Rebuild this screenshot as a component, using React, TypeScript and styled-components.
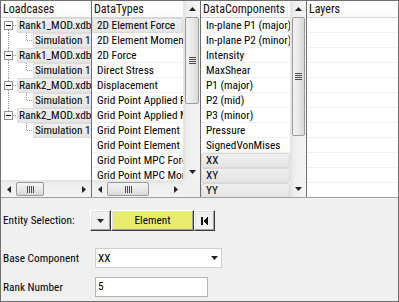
import React from 'react';
import styled, { createGlobalStyle, css } from 'styled-components';

const FONT = `'Roboto', 'Liberation Sans', Arial, sans-serif`;

const GlobalStyle = createGlobalStyle`
  html, body { margin: 0; padding: 0; background: #f0f0f0; }
  body { font-family: ${FONT}; font-stretch: 75%; }
  * { box-sizing: border-box; }
`;

const Frame = styled.div`
  width: 399px;
  height: 302px;
  border: 1px solid #707070;
  background: #f0f0f0;
  display: flex;
  flex-direction: column;
  overflow: hidden;
`;

const PanelRow = styled.div`
  display: grid;
  grid-template-columns: 91px 109px 106px 1fr;
  height: 197px;
  flex-shrink: 0;
  border-bottom: 1px solid #a0a0a0;
`;

const Panel = styled.div<{ $vscroll?: number; $hscroll?: boolean; $last?: boolean }>`
  display: grid;
  grid-template-columns: 1fr ${p => (p.$vscroll ? `${p.$vscroll}px` : '')};
  grid-template-rows: 1fr ${p => (p.$hscroll ? '17px' : '')};
  border-right: ${p => (p.$last ? 'none' : '1px solid #6f6f6f')};
  background: #fff;
  overflow: hidden;
  min-width: 0;
  min-height: 0;
`;

const List = styled.div`
  display: flex;
  flex-direction: column;
  overflow: hidden;
  min-width: 0;
  min-height: 0;
`;

const Header = styled.div`
  height: 17px;
  flex-shrink: 0;
  padding-left: 2px;
  border-bottom: 1px solid #d5d5d5;
  background: linear-gradient(#ffffff, #fafafa);
  font-size: 12px;
  line-height: 16px;
  color: #1c0c0c;
  white-space: nowrap;
`;

const Rows = styled.div<{ $grid?: boolean }>`
  flex: 1;
  background: ${p =>
    p.$grid ? 'repeating-linear-gradient(to bottom, transparent 0 14px, #eef2f7 14px 15px)' : '#fff'};
`;

const Item = styled.div<{ $selected?: boolean }>`
  height: 15px;
  padding-left: 5px;
  font-size: 11.3px;
  line-height: 15px;
  color: #000;
  white-space: nowrap;
  overflow: hidden;
  ${p =>
    p.$selected &&
    css`
      background: linear-gradient(#efefef, #e4e4e4);
      border: 1px solid #d9d9d9;
      border-radius: 2px;
      padding-left: 4px;
      line-height: 13px;
    `}
`;

const TreeRow = styled.div`
  height: 15px;
  display: flex;
  white-space: nowrap;
`;

const TreeSvg = styled.svg`
  flex-shrink: 0;
`;

const TreeLabel = styled.span`
  flex-shrink: 0;
  height: 15px;
  padding: 0 2px 0 1px;
  background: linear-gradient(#efefef, #e5e5e5);
  border: 1px solid #dcdcdc;
  border-radius: 1px;
  font-size: 11.3px;
  line-height: 13px;
  color: #000;
`;

/* scrollbars */
const VTrack = styled.div`
  display: flex;
  flex-direction: column;
  background: linear-gradient(to right, #e3e3e3 0, #eeeeee 3px, #f4f4f4 100%);
  border-left: 1px solid #e6e6e6;
  min-height: 0;
`;

const HTrack = styled.div`
  display: flex;
  background: linear-gradient(to bottom, #e3e3e3 0, #eeeeee 3px, #f4f4f4 100%);
  border-top: 1px solid #e6e6e6;
  min-width: 0;
`;

const ArrowCell = styled.div<{ $horizontal?: boolean }>`
  flex-shrink: 0;
  ${p => (p.$horizontal ? 'width: 15px;' : 'height: 16px;')}
  display: flex;
  align-items: center;
  justify-content: center;
`;

const Spacer = styled.div`
  flex: 1;
`;

const VThumb = styled.div<{ $offset: number; $length: number }>`
  margin: ${p => p.$offset}px 1px 0 1px;
  height: ${p => p.$length}px;
  flex-shrink: 0;
  border: 1px solid #9a9a9a;
  border-radius: 2px;
  background: linear-gradient(to right, #f4f4f4, #e8e8e8 50%, #d9d9d9);
  display: flex;
  align-items: center;
  justify-content: center;
`;

const HThumb = styled.div<{ $offset: number; $length: number }>`
  margin: 1px 0 1px ${p => p.$offset}px;
  width: ${p => p.$length}px;
  flex-shrink: 0;
  border: 1px solid #9a9a9a;
  border-radius: 2px;
  background: linear-gradient(to bottom, #f4f4f4, #e8e8e8 50%, #d9d9d9);
  display: flex;
  align-items: center;
  justify-content: center;
`;

const Corner = styled.div`
  background: #f0f0f0;
`;

/* bottom form */
const Form = styled.div`
  flex: 1;
  padding: 12px 0 0 1px;
  display: flex;
  flex-direction: column;
`;

const FieldRow = styled.div<{ $gap: number; $height: number }>`
  display: flex;
  align-items: center;
  margin-top: ${p => p.$gap}px;
  height: ${p => p.$height}px;
`;

const Label = styled.span`
  width: 88px;
  flex-shrink: 0;
  padding-left: 1px;
  font-size: 11.3px;
  color: #000;
  white-space: nowrap;
`;

const RaisedButton = styled.button<{ $width: number; $yellow?: boolean }>`
  width: ${p => p.$width}px;
  height: 21px;
  margin: 0;
  padding: 0;
  border: 1px solid;
  border-color: #ffffff #3c3c3c #3c3c3c #ffffff;
  box-shadow: inset -1px -1px #a0a0a0, inset 1px 1px #e3e3e3;
  background: ${p => (p.$yellow ? '#e9eb6e' : '#f0f0f0')};
  font-family: inherit;
  font-stretch: inherit;
  font-size: 11.3px;
  color: #000;
  display: flex;
  align-items: center;
  justify-content: center;
`;

const Select = styled.div`
  margin-left: 5px;
  width: 127px;
  height: 20px;
  border: 1px solid #cfcfcf;
  background: #fff;
  display: flex;
  align-items: center;
  justify-content: space-between;
  padding: 0 3px 0 2px;
  font-size: 11.3px;
  color: #000;
`;

const TextBox = styled.div`
  margin-left: 5px;
  width: 113px;
  height: 20px;
  border: 1px solid #b4b4b4;
  background: #fff;
  padding-left: 2px;
  font-size: 11.3px;
  line-height: 18px;
  color: #000;
`;

const Arrow = ({ dir }: { dir: 'up' | 'down' | 'left' | 'right' }) => {
  const pts = {
    up: '0,4 7,4 3.5,0',
    down: '0,0 7,0 3.5,4',
    left: '4,0 4,7 0,3.5',
    right: '0,0 0,7 4,3.5',
  }[dir];
  const vertical = dir === 'up' || dir === 'down';
  return (
    <svg width={vertical ? 7 : 4} height={vertical ? 4 : 7} viewBox={vertical ? '0 0 7 4' : '0 0 4 7'}>
      <polygon points={pts} fill="#222" />
    </svg>
  );
};

const Grip = ({ horizontal }: { horizontal?: boolean }) =>
  horizontal ? (
    <svg width="7" height="7" shapeRendering="crispEdges">
      {[0, 2, 4, 6].map(x => (
        <line key={x} x1={x + 0.5} y1="0" x2={x + 0.5} y2="7" stroke="#4d4d4d" />
      ))}
    </svg>
  ) : (
    <svg width="7" height="7" shapeRendering="crispEdges">
      {[0, 2, 4, 6].map(y => (
        <line key={y} x1="0" y1={y + 0.5} x2="7" y2={y + 0.5} stroke="#4d4d4d" />
      ))}
    </svg>
  );

const VScrollBar = ({ offset, length }: { offset: number; length: number }) => (
  <VTrack>
    <ArrowCell>
      <Arrow dir="up" />
    </ArrowCell>
    <VThumb $offset={offset} $length={length}>
      <Grip />
    </VThumb>
    <Spacer />
    <ArrowCell>
      <Arrow dir="down" />
    </ArrowCell>
  </VTrack>
);

const HScrollBar = ({ offset, length }: { offset: number; length: number }) => (
  <HTrack>
    <ArrowCell $horizontal>
      <Arrow dir="left" />
    </ArrowCell>
    <HThumb $offset={offset} $length={length}>
      <Grip horizontal />
    </HThumb>
    <Spacer />
    <ArrowCell $horizontal>
      <Arrow dir="right" />
    </ArrowCell>
  </HTrack>
);

const DOT = { stroke: '#9c9c9c', strokeDasharray: '1 1' };

interface TreeNode {
  label: string;
  child: string;
}

const TreeLines = ({ root, first, hasNext }: { root: boolean; first: boolean; hasNext: boolean }) => (
  <TreeSvg width={root ? 16 : 32} height="15" shapeRendering="crispEdges">
    {root ? (
      <>
        {!first && <line x1="7.5" y1="0" x2="7.5" y2="3" {...DOT} />}
        {hasNext && <line x1="7.5" y1="12" x2="7.5" y2="15" {...DOT} />}
        <line x1="12" y1="7.5" x2="16" y2="7.5" {...DOT} />
        <rect x="3.5" y="3.5" width="8" height="8" fill="#fff" stroke="#919191" />
        <line x1="5" y1="7.5" x2="10" y2="7.5" stroke="#000" />
      </>
    ) : (
      <>
        {hasNext && <line x1="7.5" y1="0" x2="7.5" y2="15" {...DOT} />}
        <line x1="25.5" y1="0" x2="25.5" y2="7.5" {...DOT} />
        <line x1="26" y1="7.5" x2="32" y2="7.5" {...DOT} />
      </>
    )}
  </TreeSvg>
);

const loadcases: TreeNode[] = [
  { label: 'Rank1_MOD.xdb', child: 'Simulation 1' },
  { label: 'Rank1_MOD.xdb', child: 'Simulation 1' },
  { label: 'Rank2_MOD.xdb', child: 'Simulation 1' },
  { label: 'Rank2_MOD.xdb', child: 'Simulation 1' },
];

const dataTypes = [
  '2D Element Force',
  '2D Element Moment',
  '2D Force',
  'Direct Stress',
  'Displacement',
  'Grid Point Applied Force',
  'Grid Point Applied Moment',
  'Grid Point Element Force',
  'Grid Point Element Moment',
  'Grid Point MPC Force',
  'Grid Point MPC Moment',
];

const dataComponents = [
  'In-plane P1 (major)',
  'In-plane P2 (minor)',
  'Intensity',
  'MaxShear',
  'P1 (major)',
  'P2 (mid)',
  'P3 (minor)',
  'Pressure',
  'SignedVonMises',
  'XX',
  'XY',
  'YY',
];
const selectedComponents = ['XX', 'XY', 'YY'];

const App: React.FC = () => {
  return (
    <>
      <GlobalStyle />
      <Frame>
        <PanelRow>
          <Panel $hscroll>
            <List>
              <Header>Loadcases</Header>
              <Rows>
                {loadcases.map((node, i) => (
                  <React.Fragment key={`${node.label}${i}`}>
                    <TreeRow>
                      <TreeLines root first={i === 0} hasNext={i < loadcases.length - 1} />
                      <TreeLabel>{node.label}</TreeLabel>
                    </TreeRow>
                    <TreeRow>
                      <TreeLines root={false} first={false} hasNext={i < loadcases.length - 1} />
                      <TreeLabel>{node.child}</TreeLabel>
                    </TreeRow>
                  </React.Fragment>
                ))}
              </Rows>
            </List>
            <HScrollBar offset={0} length={28} />
          </Panel>

          <Panel $vscroll={17} $hscroll>
            <List>
              <Header>DataTypes</Header>
              <Rows $grid>
                {dataTypes.map((name, i) => (
                  <Item key={name} $selected={i === 0}>
                    {name}
                  </Item>
                ))}
              </Rows>
            </List>
            <VScrollBar offset={0} length={87} />
            <HScrollBar offset={0} length={42} />
            <Corner />
          </Panel>

          <Panel $vscroll={16}>
            <List>
              <Header>DataComponents</Header>
              <Rows $grid>
                {dataComponents.map(name => (
                  <Item key={name} $selected={selectedComponents.includes(name)}>
                    {name}
                  </Item>
                ))}
              </Rows>
            </List>
            <VScrollBar offset={0} length={119} />
          </Panel>

          <Panel $last>
            <List>
              <Header>Layers</Header>
              <Rows $grid />
            </List>
          </Panel>
        </PanelRow>

        <Form>
          <FieldRow $gap={0} $height={21}>
            <Label>Entity Selection:</Label>
            <RaisedButton $width={21}>
              <Arrow dir="down" />
            </RaisedButton>
            <RaisedButton $width={83} $yellow>
              Element
            </RaisedButton>
            <RaisedButton $width={21}>
              <svg width="7" height="8" viewBox="0 0 7 8" shapeRendering="crispEdges">
                <rect x="0" y="0" width="2" height="8" fill="#111" />
                <polygon points="7,0 7,8 2.5,4" fill="#111" />
              </svg>
            </RaisedButton>
          </FieldRow>
          <FieldRow $gap={17} $height={20}>
            <Label>Base Component</Label>
            <Select>
              <span>XX</span>
              <Arrow dir="down" />
            </Select>
          </FieldRow>
          <FieldRow $gap={9} $height={20}>
            <Label>Rank Number</Label>
            <TextBox>5</TextBox>
          </FieldRow>
        </Form>
      </Frame>
    </>
  );
};

export default App;
